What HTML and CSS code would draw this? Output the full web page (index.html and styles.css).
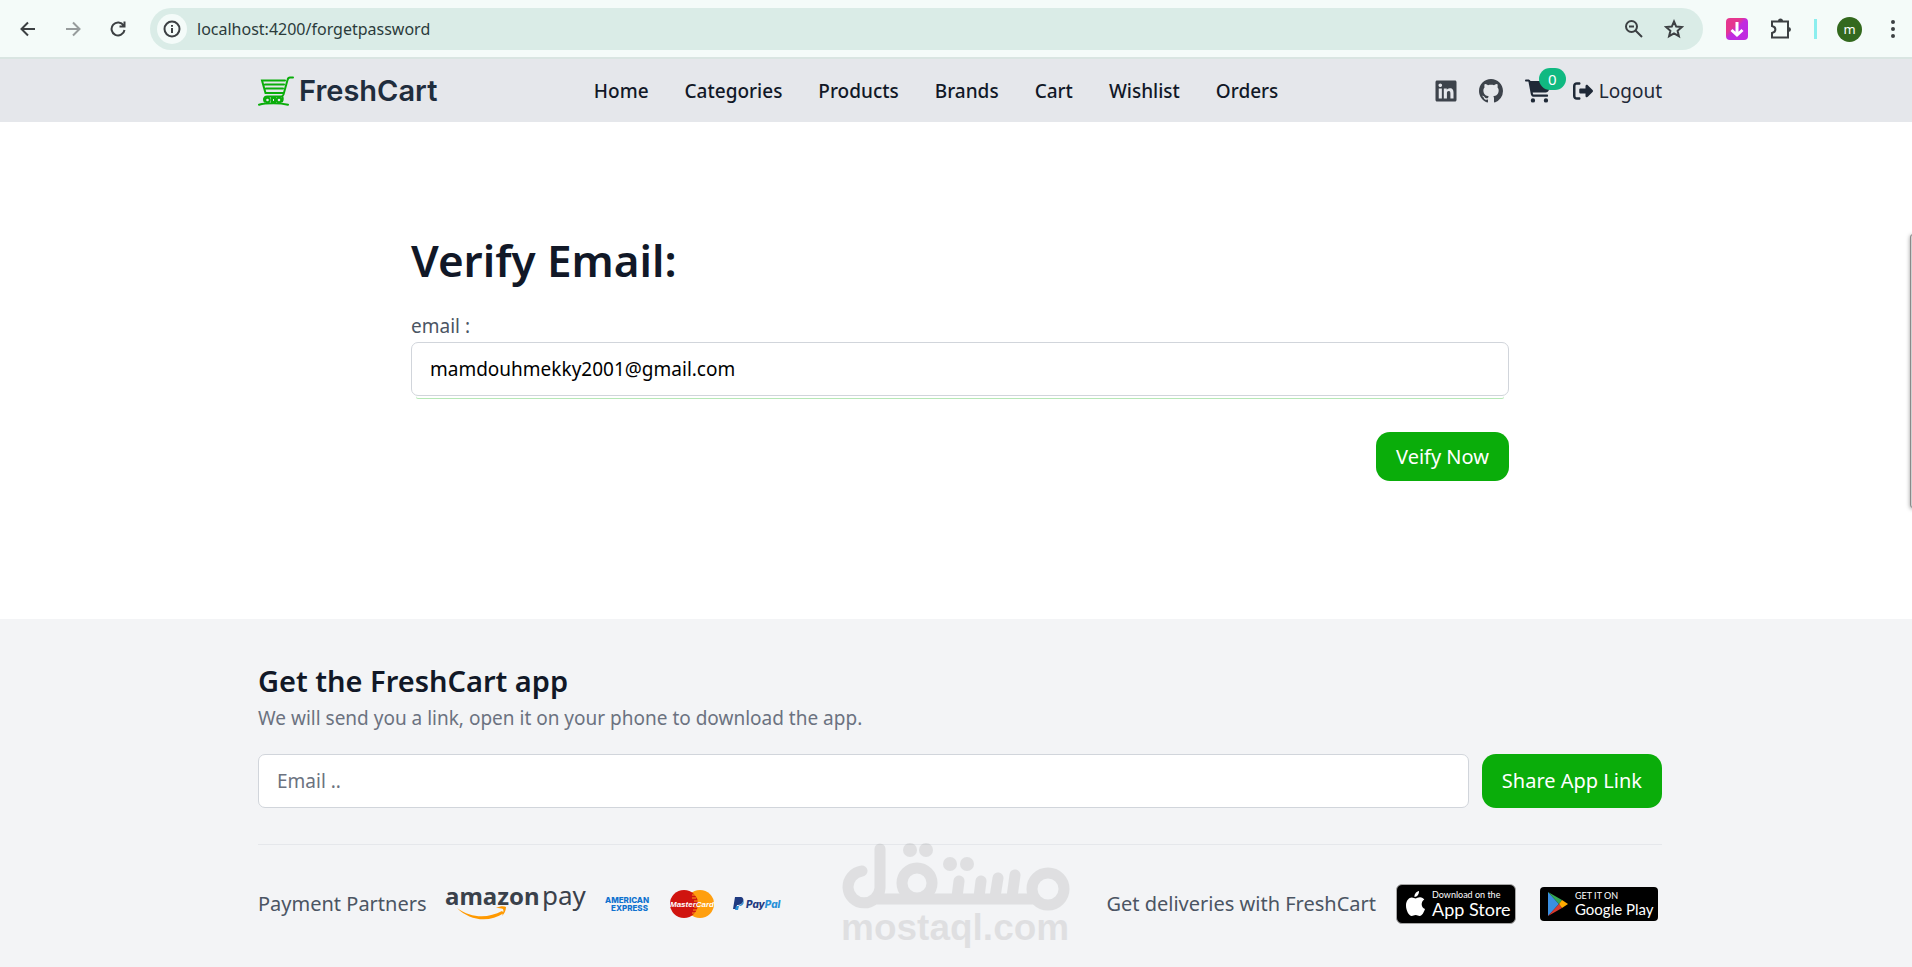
FILE: index.html
```html
<!DOCTYPE html>
<html lang="en">

<head>
    <meta charset="UTF-8">
    <meta name="viewport" content="width=device-width, initial-scale=1.0">
    <title>FreshCart</title>

    <link rel="stylesheet" href="styles.css">
</head>

<body>
    <!-- browser bar -->
    <div class="browser">
        <button class="tool" aria-label="Back">
            <svg width="16" height="16" viewBox="0 0 16 16"><path d="M15 8H2M8 1.500L1.500 8L8 14.500" /></svg>
        </button>
        <button class="tool faded" aria-label="Forward">
            <svg width="16" height="16" viewBox="0 0 16 16"><path d="M1 8H14M8 1.500L14.500 8L8 14.500" /></svg>
        </button>
        <button class="tool" aria-label="Reload">
            <svg width="16" height="16" viewBox="0 0 16 16"><path d="M13.600 4.500A6.500 6.500 0 1 0 14.500 9M14.500 0.500V5.500H9.500" /></svg>
        </button>
        <div class="omnibox">
            <span class="info">
                <svg width="18" height="18" viewBox="0 0 18 18"><circle cx="9" cy="9" r="7.500" /><path d="M9 8V13M9 5V6.800" /></svg>
            </span>
            <input class="url" type="text" value="localhost:4200/forgetpassword" aria-label="Address">
            <button class="tool" aria-label="Zoom">
                <svg width="20" height="20" viewBox="0 0 20 20"><circle cx="7.500" cy="7.500" r="5.500" /><path d="M5 7.500H10M11.500 11.500L18 18" /></svg>
            </button>
            <button class="tool" aria-label="Bookmark">
                <svg width="20" height="20" viewBox="0 0 20 20"><path d="M10 2.500L12.200 7.600L17.800 8.100L13.600 11.800L14.900 17.200L10 14.300L5.100 17.200L6.400 11.800L2.200 8.100L7.800 7.600Z" /></svg>
            </button>
        </div>
        <div class="extensions">
            <button class="tool" aria-label="Downloader">
                <svg width="22" height="22" viewBox="0 0 22 22">
                    <defs>
                        <linearGradient id="pink" x1="0" y1="0" x2="1" y2="1">
                            <stop offset="0.350" stop-color="#e5368f" />
                            <stop offset="0.500" stop-color="#c02be0" />
                        </linearGradient>
                    </defs>
                    <rect class="plain" width="22" height="22" rx="4" fill="url(#pink)" />
                    <path class="white" d="M11 4V17M5.500 12L11 17L16.500 12" />
                </svg>
            </button>
            <button class="tool" aria-label="Extensions">
                <svg width="22" height="22" viewBox="0 0 22 22"><path d="M2 3.500H18V19.500H2V15C6.500 14 6.500 9 2 8Z" /><path class="solid" d="M8 3A2.500 2.500 0 0 1 13 3ZM18.500 9A2.500 2.500 0 0 1 18.500 14Z" /></svg>
            </button>
            <span class="divider"></span>
            <button class="avatar">m</button>
            <button class="tool" aria-label="Menu">
                <svg width="6" height="20" viewBox="0 0 6 20"><path class="solid" d="M1 3a2 2 0 1 0 4 0a2 2 0 1 0-4 0M1 10a2 2 0 1 0 4 0a2 2 0 1 0-4 0M1 17a2 2 0 1 0 4 0a2 2 0 1 0-4 0" /></svg>
            </button>
        </div>
    </div>

    <header class="header">
        <div class="container nav">
            <a class="logo" href="#">
                <svg width="36" height="30" viewBox="0 0 36 30">
                    <path d="M35 1.500H32C30.500 1.500 30 2 29.500 4L25.500 18.500C25 20 24.500 20.500 23 20.500H9M27 4.500H4L7.500 17H25.500M7 8.500H26M8 12.500H25M9 20.500C6 20.500 5.500 23 6.500 25.500M24 20.500C25 21.500 25 24 24 25.500M1 28.800C8 26.800 22 26.800 30 28.800" />
                    <circle cx="9.500" cy="24" r="2.300" /><circle cx="21" cy="24" r="2.300" />
                    <path d="M14 22H17V26H14Z" />
                </svg>
                <span>FreshCart</span>
            </a>
            <nav class="links">
                <a href="#">Home</a>
                <a href="#">Categories</a>
                <a href="#">Products</a>
                <a href="#">Brands</a>
                <a href="#">Cart</a>
                <a href="#">Wishlist</a>
                <a href="#">Orders</a>
            </nav>
            <div class="account">
                <a class="social" href="#" aria-label="LinkedIn">
                    <svg width="22" height="24" viewBox="0 0 448 512"><path d="M416 32H31.900C14.300 32 0 46.500 0 64.300v383.400C0 465.500 14.300 480 31.900 480H416c17.600 0 32-14.500 32-32.300V64.300c0-17.800-14.400-32.300-32-32.300zM135.400 416H69V202.200h66.500V416zm-33.200-243c-21.300 0-38.500-17.300-38.500-38.500S80.900 96 102.200 96c21.200 0 38.500 17.300 38.500 38.500 0 21.300-17.200 38.500-38.500 38.500zm282.100 243h-66.400V312c0-24.800-.5-56.700-34.500-56.700-34.600 0-39.900 27-39.900 54.900V416h-66.400V202.200h63.700v29.200h.9c8.900-16.800 30.600-34.500 62.900-34.500 67.200 0 79.700 44.300 79.700 101.900V416z" /></svg>
                </a>
                <a class="social" href="#" aria-label="GitHub">
                    <svg width="24" height="24" viewBox="0 0 16 16"><path d="M8 0C3.580 0 0 3.580 0 8c0 3.540 2.290 6.530 5.470 7.590.4.070.55-.17.55-.38 0-.19-.010-.820-.010-1.490-2.010.37-2.530-.49-2.690-.940-.090-.23-.48-.940-.820-1.130-.28-.15-.68-.52-.010-.53.63-.010 1.080.58 1.230.82.72 1.210 1.870.87 2.330.66.070-.52.28-.87.510-1.070-1.780-.2-3.640-.89-3.640-3.950 0-.87.31-1.590.82-2.150-.080-.2-.36-1.020.080-2.120 0 0 .67-.21 2.200.82.64-.18 1.320-.27 2-.27s1.360.090 2 .27c1.530-1.040 2.200-.82 2.200-.82.44 1.100.16 1.920.080 2.120.51.56.82 1.270.82 2.150 0 3.070-1.870 3.750-3.650 3.950.29.25.54.73.54 1.480 0 1.070-.010 1.930-.010 2.200 0 .21.15.46.55.38A8.010 8.010 0 0 0 16 8c0-4.420-3.580-8-8-8z" /></svg>
                </a>
                <a class="cart" href="#" aria-label="Cart">
                    <svg width="26" height="24" viewBox="0 0 576 512"><path d="M0 24C0 10.700 10.700 0 24 0H69.500c22 0 41.500 12.800 50.600 32h411c26.300 0 45.500 25 38.600 50.400l-41 152.300c-8.500 31.400-37 53.300-69.500 53.300H170.700l5.400 28.500c2.200 11.300 12.100 19.500 23.600 19.500H488c13.300 0 24 10.700 24 24s-10.700 24-24 24H199.700c-34.600 0-64.300-24.600-70.700-58.500L77.400 54.500c-.7-3.800-4-6.500-7.900-6.500H24C10.700 48 0 37.300 0 24zM128 464a48 48 0 1 1 96 0 48 48 0 1 1-96 0zm336-48a48 48 0 1 1 0 96 48 48 0 1 1 0-96z" /></svg>
                    <span class="badge">0</span>
                </a>
                <a class="logout" href="#">
                    <svg width="20" height="20" viewBox="0 0 512 512"><path d="M377.900 105.900L500.700 228.700c7.200 7.200 11.300 17.100 11.300 27.300s-4.100 20.100-11.300 27.300L377.900 406.100c-6.400 6.400-15 9.900-24 9.900c-18.700 0-33.900-15.200-33.900-33.900l0-62.100-128 0c-17.700 0-32-14.300-32-32l0-64c0-17.700 14.300-32 32-32l128 0 0-62.100c0-18.700 15.200-33.900 33.900-33.900c9 0 17.600 3.600 24 9.900zM160 96L96 96c-17.700 0-32 14.300-32 32l0 256c0 17.700 14.300 32 32 32l64 0c17.700 0 32 14.300 32 32s-14.300 32-32 32l-64 0c-53 0-96-43-96-96L0 128C0 75 43 32 96 32l64 0c17.700 0 32 14.300 32 32s-14.300 32-32 32z" /></svg>
                    Logout
                </a>
            </div>
        </div>
    </header>

    <main class="verify">
        <form class="verify-form">
            <h1>Verify Email:</h1>
            <label for="email">email :</label>
            <input class="field" id="email" type="email" value="mamdouhmekky2001@gmail.com">
            <button class="btn" type="button">Veify Now</button>
        </form>
    </main>

    <footer class="footer">
        <div class="container">
            <h2>Get the FreshCart app</h2>
            <p>We will send you a link, open it on your phone to download the app.</p>
            <form class="share">
                <input class="field" type="email" placeholder="Email .." aria-label="Email">
                <button class="btn" type="button">Share App Link</button>
            </form>
            <div class="partners">
                <div class="group payments">
                    <span>Payment Partners</span>
                    <svg class="amazon" width="142" height="32" viewBox="0 0 142 32">
                        <text class="amazon-name" x="0" y="17">amazon</text>
                        <text class="amazon-pay" x="97" y="17">pay</text>
                        <path d="M12 20C27 31 44 30 57 23L59 25C44 35 25 33 12 20ZM51 20C55 18 59 18 61 19C61 23 59 26 57 28C58 25 59 23 58 21C56 20 54 20 51 20Z" fill="#f90" />
                    </svg>
                    <svg class="amex" width="46" height="16" viewBox="0 0 46 16">
                        <text x="0" y="7">AMERICAN</text>
                        <text x="6" y="15">EXPRESS</text>
                    </svg>
                    <svg class="mastercard" width="46" height="30" viewBox="0 0 46 30">
                        <circle cx="31" cy="15" r="14" fill="#ff9f0f" />
                        <circle cx="15" cy="15" r="14" fill="#d0140f" />
                        <path d="M23 6H28M23 9H27M25 12H29M25 18H29M24 21H28M23 24H27" stroke="#ff9f0f" />
                        <text x="23" y="18">MasterCard</text>
                    </svg>
                    <svg class="paypal" width="48" height="16" viewBox="0 0 48 16">
                        <path d="M2 1H7C10 1 11 3 10 6C9 8 7 9 5 9H4L3 13H0Z" fill="#1f3a80" />
                        <path d="M10 4C12 8 9 10 6 10L5 14H2L3 10C7 10 10 8 10 4Z" fill="#2790d8" />
                        <text x="13" y="12" fill="#1f3a80">Pay<tspan fill="#2790d8">Pal</tspan></text>
                    </svg>
                </div>
                <div class="group">
                    <span>Get deliveries with FreshCart</span>
                    <a class="store apple" href="#">
                        <svg width="19" height="26" viewBox="0 0 19 26"><path d="M13 0C13.300 3 11 6 8.500 6C8.200 3 10.500 0.500 13 0ZM9.500 7.500C10.500 7.500 12 6.300 14 6.300C16 6.300 17.500 7.500 18.300 8.600C14.500 11 15 16.500 19 18C18 21 16 25 13.800 25C12 25 11.500 24 9.700 24C7.800 24 7.200 25 5.700 25C3 25 0 19.500 0 14.500C0 9.500 3 6.500 5.800 6.500C7.500 6.500 8.700 7.500 9.500 7.500Z" fill="#fff" /></svg>
                        <span><small>Download on the</small>App Store</span>
                    </a>
                    <a class="store google" href="#">
                        <svg width="20" height="26" viewBox="0 0 20 26">
                            <path d="M0 1V25L11 13Z" fill="#3b8fe0" />
                            <path d="M0 1L14 9L11 13Z" fill="#34a853" />
                            <path d="M0 25L14 17L11 13Z" fill="#d93a30" />
                            <path d="M14 9L20 13L14 17L11 13Z" fill="#fa0" />
                        </svg>
                        <span><small>GET IT ON</small>Google Play</span>
                    </a>
                </div>
            </div>
        </div>
    </footer>

    <!-- overlays -->
    <svg class="watermark" width="230" height="106" viewBox="0 0 230 106">
        <path class="stroke" d="M21 28A16 16 0 1 0 39 45V6M34 56H191" />
        <circle class="stroke" cx="76" cy="40" r="15" /><circle class="stroke" cx="207" cy="46" r="16" />
        <path class="stroke" d="M116 54L118 38M138 54L140 38M154 54L157 35M171 54L174 32" />
        <circle cx="69" cy="7" r="7" /><circle cx="85" cy="7" r="7" />
        <circle cx="109" cy="21" r="7" /><circle cx="126" cy="21" r="7" />
        <text x="0" y="97">mostaql.com</text>
    </svg>
    <div class="side-panel"></div>
</body>

</html>
```
FILE: styles.css
```css
* {
    box-sizing: border-box;
}

body {
    margin: 0;
    position: relative;
    min-height: 100vh;
    overflow-x: hidden;
    display: flex;
    flex-direction: column;
    font-family: "Noto Sans", sans-serif;
    font-size: 19px;
    line-height: 30px;
    color: #4b5563;
    background-color: #ffffff;
}

a {
    color: inherit;
    text-decoration: none;
}

button,
input {
    font: inherit;
    border: 0;
}

svg {
    display: block;
    flex: none;
}

/* browser bar */
.browser {
    display: flex;
    align-items: center;
    gap: 29px;
    height: 59px;
    padding: 1px 16px 0 20px;
    background-color: #f4fbf9;
    border-bottom: 2px solid #d9e5e2;
}

.tool {
    padding: 0;
    background: none;
}

.tool svg,
.info svg {
    fill: none;
    stroke: #3c4043;
    stroke-width: 2;
}

.tool .solid {
    fill: #3c4043;
    stroke: none;
}

.tool .plain {
    stroke: none;
}

.tool .white {
    stroke: #ffffff;
    stroke-width: 3;
}

.faded {
    opacity: 0.5;
}

.omnibox {
    flex: 1;
    display: flex;
    align-items: center;
    gap: 20px;
    height: 42px;
    margin-left: -5px;
    padding: 0 19px 0 7px;
    border-radius: 21px;
    background-color: #daece7;
}

.info {
    display: grid;
    place-items: center;
    width: 30px;
    height: 30px;
    border-radius: 50%;
    background-color: #f4fbf9;
}

.url {
    flex: 1;
    margin-left: -10px;
    padding: 0;
    font-family: "Noto Sans", sans-serif;
    font-size: 16px;
    color: #2b3b3b;
    background: none;
}

.extensions {
    display: flex;
    align-items: center;
    gap: 22px;
    margin-left: -6px;
}

.divider {
    width: 3px;
    height: 20px;
    background-color: #8beeee;
}

.avatar {
    width: 25px;
    height: 25px;
    margin: 0 6px 0 -2px;
    padding: 0;
    border-radius: 50%;
    font-size: 13px;
    line-height: 22px;
    color: #ffffff;
    background-color: #33691e;
}

/* header */
.header,
.verify,
.footer {
    padding: 0 16px 0 24px;
}

.header {
    background-color: #e5e7eb;
}

.container {
    max-width: 1404px;
    margin: 0 auto;
}

.nav {
    display: flex;
    align-items: center;
    justify-content: space-between;
    height: 63px;
}

.logo {
    display: flex;
    align-items: center;
    gap: 5px;
    font-family: Inter, sans-serif;
    font-size: 29px;
    font-weight: 600;
    color: #1f2d3d;
}

.logo svg {
    fill: none;
    stroke: #0aad0a;
    stroke-width: 2;
    stroke-linecap: round;
}

.links {
    display: flex;
    gap: 36px;
    padding-top: 1px;
    font-size: 19px;
    font-weight: 500;
    color: #111827;
}

.account {
    display: flex;
    align-items: center;
    gap: 22px;
    color: #1f2937;
}

.social {
    color: #3d434b;
}

.account svg {
    fill: currentColor;
}

.cart {
    position: relative;
}

.badge {
    position: absolute;
    top: -11px;
    left: 14px;
    width: 27px;
    border-radius: 11px;
    font-size: 15px;
    line-height: 22px;
    text-align: center;
    color: #ffffff;
    background-color: #10b981;
}

.logout {
    display: flex;
    align-items: center;
    gap: 6px;
}

/* verify form */
.verify-form {
    display: flex;
    flex-direction: column;
    max-width: 1098px;
    margin: 0 auto;
    padding: 113px 0 138px;
}

h1 {
    margin: 0 0 26px;
    font-size: 44px;
    line-height: 50px;
    font-weight: 600;
    color: #111827;
}

.verify-form label {
    padding-bottom: 1px;
}

.field {
    height: 54px;
    padding: 0 18px;
    border: 1px solid #d1d5db;
    border-radius: 7px;
    color: #000000;
    background-color: #ffffff;
}

.verify-form .field {
    box-shadow: 0 7px 0 -5px #ffffff, 0 8px 0 -5px #b6e8b6;
}

.field::placeholder {
    color: #6b7280;
    opacity: 1;
}

.btn {
    height: 54px;
    padding: 0 20px;
    border-radius: 14px;
    font-size: 20px;
    color: #ffffff;
    background-color: #0aad0a;
}

.verify-form .btn {
    align-self: flex-end;
    height: 49px;
    margin-top: 36px;
}

/* footer */
.footer {
    flex: 1;
    padding-top: 43px;
    background-color: #f3f4f6;
}

h2 {
    margin: 0;
    font-size: 29px;
    line-height: 38px;
    font-weight: 600;
    color: #111827;
}

.footer p {
    margin: 3px 0 21px;
    color: #6b7280;
}

.share {
    display: flex;
    gap: 13px;
    padding-bottom: 36px;
    border-bottom: 1px solid #e5e7eb;
}

.share .field {
    flex: 1;
}

.partners {
    display: flex;
    align-items: center;
    justify-content: space-between;
    height: 118px;
    font-size: 20px;
}

.group {
    display: flex;
    align-items: center;
    gap: 20px;
}

.payments {
    gap: 18px;
}

.amazon {
    overflow: visible;
    fill: #3a414b;
}

.amazon-name {
    font-size: 24px;
    font-weight: 700;
}

.amazon-pay {
    font-size: 26px;
}

.amex {
    fill: #0f72cf;
    font: 800 8px Inter, sans-serif;
}

.mastercard text {
    fill: #ffffff;
    font: italic 700 8px "Liberation Sans", sans-serif;
    text-anchor: middle;
}

.paypal text {
    font: italic 800 10px Inter, sans-serif;
}

.store {
    display: flex;
    align-items: center;
    border-radius: 6px;
    font-family: Lato, sans-serif;
    white-space: nowrap;
    color: #ffffff;
    background-color: #000000;
}

.store small {
    display: block;
    font-size: 9px;
    line-height: 9px;
}

.apple {
    gap: 7px;
    width: 120px;
    height: 40px;
    padding-left: 9px;
    font-size: 18px;
    line-height: 20px;
    border: 1px solid #a6a6a6;
}

.google {
    gap: 7px;
    width: 118px;
    height: 34px;
    margin: 0 4px;
    padding-left: 8px;
    border-radius: 4px;
    font-size: 15px;
    line-height: 18px;
}

/* overlays */
.watermark {
    position: absolute;
    right: 841px;
    bottom: 18px;
    overflow: visible;
    fill: #000000;
    opacity: 0.08;
}

.watermark .stroke {
    fill: none;
    stroke: #000000;
    stroke-width: 11;
    stroke-linecap: round;
}

.watermark text {
    font: 700 37px "Liberation Sans", sans-serif;
}

.side-panel {
    position: absolute;
    top: 234px;
    right: -4px;
    width: 6px;
    height: 274px;
    border: 1px solid #8a8a8a;
    border-radius: 6px;
    background-color: #d0d0d0;
    box-shadow: 0 1px 4px rgba(0, 0, 0, 0.4);
}
```
